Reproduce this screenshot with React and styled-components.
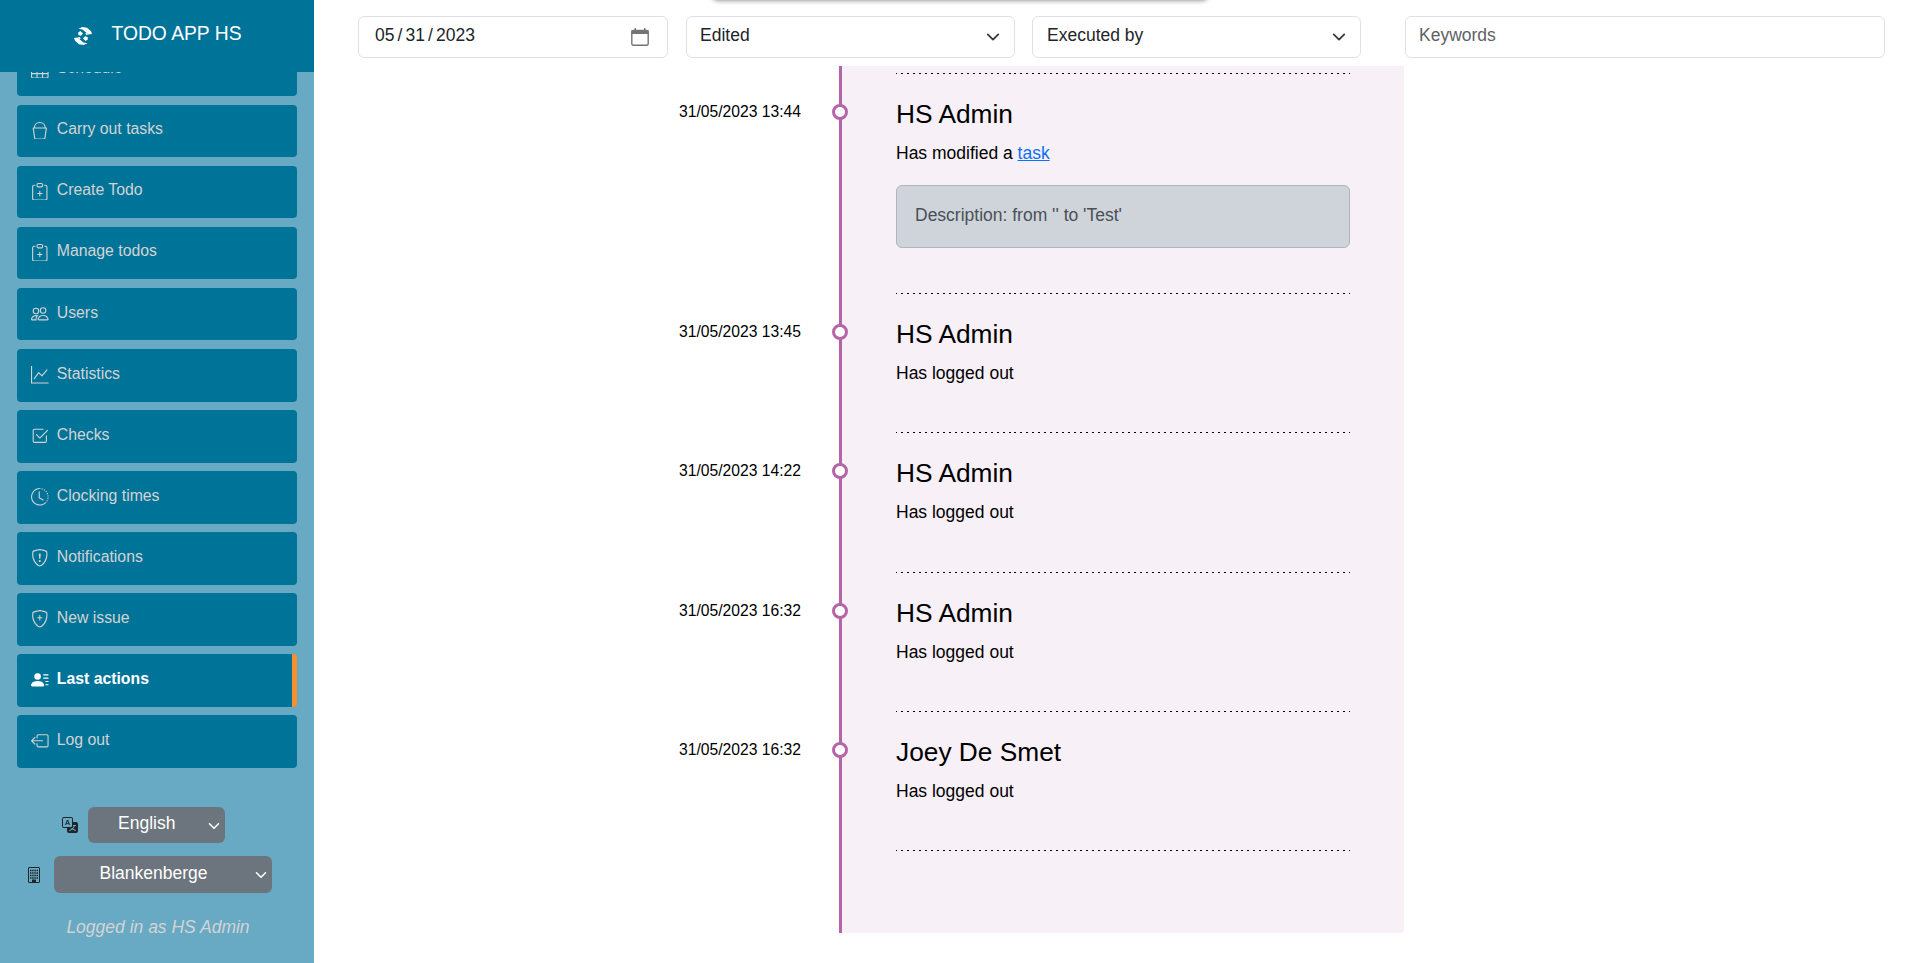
import React from "react";
import styled, { createGlobalStyle } from "styled-components";
import {
  BsTable, BsBucket, BsClipboardPlus, BsPeople, BsGraphUp, BsCheck2Square, BsClockHistory,
  BsShieldExclamation, BsShieldPlus, BsPersonLinesFill, BsBoxArrowLeft, BsTranslate,
} from "react-icons/bs";

const Global = createGlobalStyle`
  * { box-sizing: border-box; }
  body { margin: 0; overflow: hidden; background: #fff; font-family: "Liberation Sans", Arial, sans-serif; font-size: 17.5px; line-height: 1.5; }
`;
const Page = styled.div`display: flex; height: 963px; overflow: hidden;`;
const Sidebar = styled.aside`width: 314px; flex: none; display: flex; flex-direction: column; background: #68aac3;`;
const Brand = styled.header`
  height: 72px; flex: none; background: #007399; color: #fff; display: flex; align-items: flex-start;
  padding: 21px 0 0 74px; gap: 19.5px; font-size: 19.3px; line-height: 26px; white-space: nowrap;
  svg { margin-top: 6px; }
`;
const MenuClip = styled.nav`
  height: 698px; overflow: hidden; display: flex; flex-direction: column; justify-content: flex-end;
  padding: 0 17px 2.2px; gap: 8.47px; flex: none;
`;
const MenuItem = styled.a`
  height: 52.58px; flex: none; display: flex; align-items: flex-start; gap: 8.2px; padding: 12.6px 0 0 14px;
  border-radius: 4px; background: #007399; line-height: 24px; font-size: 15.8px; white-space: nowrap;
  color: ${p => (p.$active ? "#fff" : "#d3d3d3")};
  font-weight: ${p => (p.$active ? 700 : 400)};
  border-right: ${p => (p.$active ? "5px solid #f78f2e" : "0")};
  svg { width: 17.6px; height: 17.6px; flex: none; margin-top: 4.4px; }
`;
const Picker = styled.div`
  display: flex; align-items: center; height: ${p => p.$h}px; margin: ${p => p.$m};
  gap: ${p => p.$gap}px;
`;
const PickerButton = styled.div`
  width: ${p => p.$w}px; height: 100%; background: #6c757d; color: #fff; border-radius: 6px;
  display: flex; align-items: center; justify-content: space-between; padding: 0 5px 3px ${p => p.$pl}px;
  svg { margin-top: 4px; }
`;
const LoggedIn = styled.div`margin: 21px 0 0 2px; text-align: center; font-style: italic; color: #d3d3d3; line-height: 26px;`;
const Main = styled.main`flex: 1; min-width: 0; display: flex; flex-direction: column; position: relative;`;
const Toast = styled.div`
  position: absolute; left: 398px; top: -40px; width: 496px; height: 39px; border-radius: 6px;
  box-shadow: 0 2px 4px rgba(0,0,0,.4);
`;
const Filters = styled.div`height: 66px; flex: none; display: flex; padding: 16px 0 0 44px;`;
const Field = styled.div`
  width: ${p => p.$w}px; margin-right: ${p => p.$mr}px; height: 42px; flex: none; border: 1px solid #dee2e6; border-radius: 6px;
  display: flex; align-items: center; justify-content: space-between; padding: 0 ${p => p.$pr || 14}px 4px ${p => p.$pl || 13}px;
  color: ${p => (p.$muted ? "#5e6266" : "#212529")}; white-space: pre;
  svg { margin-top: 3px; }
`;
const DateParts = styled.span`display: flex; gap: 3.1px;`;
const Feed = styled.div`display: flex; flex: 1; min-height: 0; justify-content: flex-start; padding-left: 525px;`;
const Timeline = styled.section`
  width: 565px; height: 867px; background: #f7f0f7; border-left: 3px solid #b565a7;
  border-radius: 0 0 4px 0; padding: 7px 54px 0;
`;
const Rule = styled.div`
  height: 2px; width: 454px;
  background: repeating-linear-gradient(90deg, #000 0 1px, transparent 1px 4.974px, #000 4.974px 5.974px);
  background-size: 100% 1px; background-repeat: no-repeat;
`;
const Entry = styled.article`height: ${p => p.$h}px; position: relative; padding-top: 21px; color: #000;`;
const Stamp = styled.time`
  position: absolute; right: 549px; top: 25px; font-size: 15.68px; line-height: 24px; white-space: nowrap;
`;
const Dot = styled.i`
  position: absolute; left: -64px; top: 29px; width: 16px; height: 16px; border-radius: 50%;
  background: #fff; border: 3px solid #b565a7;
`;
const Name = styled.h2`margin: 0; font-weight: 400; font-size: 26.3px; line-height: 36px;`;
const Text = styled.p`margin: 8px 0 0; line-height: 26px; a { color: #0d6efd; text-decoration: underline; }`;
const Alert = styled.div`
  margin-top: 19px; height: 63px; border: 1px solid #adb5bd; border-radius: 6px; background: #ced4da;
  color: #495057; padding: 16px 18px; line-height: 26px;
`;

const Chevron = ({ size = 14, color = "#343a40" }) => (
  <svg width={size} height={size} viewBox="0 0 16 16" fill="none" stroke={color} strokeWidth="2.1" strokeLinecap="round" strokeLinejoin="round">
    <path d="m2 5 6 6 6-6" />
  </svg>
);
const LogoHalf = () => (
  <>
    <path d="M4.500 1.800 8.500 0l4.500.8 4 3.400 1 2.800-3.500.6L8.500 2.600z" />
    <path d="M4 5.800 6.300 4l2.700 2.500-2 2.200L4.500 8zM11.300 6.500 12.300 5.700 14 7.500 12.700 8.300z" />
  </>
);
const Logo = () => (
  <svg width="18" height="18" viewBox="0 0 18 18" fill="#fff">
    <LogoHalf />
    <g transform="rotate(180 9 9)"><LogoHalf /></g>
  </svg>
);
const Building = () => (
  <svg width="16" height="16" viewBox="0 0 16 16" fill="none" stroke="#212529">
    <rect x="2.500" y=".5" width="11" height="15" rx=".5" />
    <path d="M6 12.500h4V16H6z" fill="#212529" stroke="none" />
    <path d="M4 3.500h8M4 6h8M4 8.500h8M4 11h8" strokeWidth="1.500" strokeDasharray="1.500 .666" />
  </svg>
);
const Calendar = () => (
  <svg width="18" height="18" viewBox="0 0 18 18">
    <rect x=".8" y="2.500" width="16.400" height="14.700" rx="1.500" fill="none" stroke="#757575" strokeWidth="1.400" />
    <path d="M.5 2h17v4H.5zM3.500 0H5v3H3.500zM13 0h1.500v3H13z" fill="#757575" />
  </svg>
);

const menu = [
  ["Schedule", BsTable], ["Carry out tasks", BsBucket], ["Create Todo", BsClipboardPlus],
  ["Manage todos", BsClipboardPlus], ["Users", BsPeople], ["Statistics", BsGraphUp],
  ["Checks", BsCheck2Square], ["Clocking times", BsClockHistory], ["Notifications", BsShieldExclamation],
  ["New issue", BsShieldPlus], ["Last actions", BsPersonLinesFill], ["Log out", BsBoxArrowLeft],
];
const entries = [
  { time: "31/05/2023 13:44", name: "HS Admin", edit: true },
  { time: "31/05/2023 13:45", name: "HS Admin" },
  { time: "31/05/2023 14:22", name: "HS Admin" },
  { time: "31/05/2023 16:32", name: "HS Admin" },
  { time: "31/05/2023 16:32", name: "Joey De Smet" },
];

export default function App() {
  return (
    <Page>
      <Global />
      <Sidebar>
        <Brand><Logo />TODO APP HS</Brand>
        <MenuClip>
          {menu.map(([label, Icon]) => (
            <MenuItem key={label} $active={label === "Last actions"}><Icon />{label}</MenuItem>
          ))}
        </MenuClip>
        <Picker $h={36} $m="37px 0 0 62px" $gap={10}>
          <BsTranslate size={16} color="#212529" />
          <PickerButton $w={137} $pl={30}>English<Chevron size={12} color="#fff" /></PickerButton>
        </Picker>
        <Picker $h={37} $m="13px 0 0 26px" $gap={12}>
          <Building />
          <PickerButton $w={218} $pl={45.5}>Blankenberge<Chevron size={12} color="#fff" /></PickerButton>
        </Picker>
        <LoggedIn>Logged in as HS Admin</LoggedIn>
      </Sidebar>
      <Main>
        <Toast />
        <Filters>
          <Field $w={310} $mr={18} $pl={16} $pr={18}>
            <DateParts><span>05</span><span>/</span><span>31</span><span>/</span><span>2023</span></DateParts>
            <Calendar />
          </Field>
          <Field $w={329} $mr={17}>Edited<Chevron /></Field>
          <Field $w={329} $mr={44} $pl={14}>Executed by<Chevron /></Field>
          <Field $w={480} $mr={0} $muted>Keywords</Field>
        </Filters>
        <Feed>
          <Timeline>
            <Rule />
            {entries.map((e, i) => (
              <React.Fragment key={i}>
                <Entry $h={e.edit ? 218 : 137.25}>
                  <Stamp>{e.time}</Stamp>
                  <Dot />
                  <Name>{e.name}</Name>
                  <Text>{e.edit ? <>Has modified a <a>task</a></> : "Has logged out"}</Text>
                  {e.edit && <Alert>Description: from '' to 'Test'</Alert>}
                </Entry>
                <Rule />
              </React.Fragment>
            ))}
          </Timeline>
        </Feed>
      </Main>
    </Page>
  );
}
